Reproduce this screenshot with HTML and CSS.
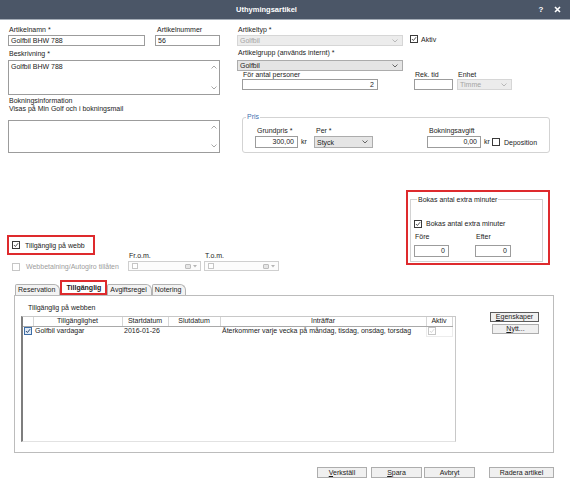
FILE: index.html
```html
<!DOCTYPE html>
<html lang="sv">
<head>
    <meta charset="UTF-8">
    <title>Uthymingsartikel</title>
    <link rel="stylesheet" href="styles.css">
</head>
<body>
    <div class="titlebar">
        <span class="title">Uthymingsartikel</span>
        <span class="tb-btn">?</span>
        <span class="tb-btn">
            <svg width="7" height="7" viewBox="0 0 7 7"><path d="M1 1L6 6M6 1L1 6" stroke="#fff" stroke-width="1.6"/></svg>
        </span>
    </div>

    <div class="content">
        <!-- övre delen: artikeldata -->
        <div class="top">
            <div class="col">
                <div class="row">
                    <div class="field f-name">
                        <span class="lbl">Artikelnamn *</span>
                        <div class="input">Golfbil BHW 788</div>
                    </div>
                    <div class="field f-number">
                        <span class="lbl">Artikelnummer</span>
                        <div class="input">56</div>
                    </div>
                </div>

                <span class="lbl lbl-desc">Beskrivning *</span>
                <div class="textarea ta-desc">
                    <div class="text">Golfbil BHW 788</div>
                    <div class="scroll">
                        <svg class="arrow" viewBox="0 0 6 4"><path d="M0.5 3.5L3 1L5.5 3.5" fill="none" stroke="#a8a8a8"/></svg>
                        <svg class="arrow" viewBox="0 0 6 4"><path d="M0.5 0.5L3 3L5.5 0.5" fill="none" stroke="#a8a8a8"/></svg>
                    </div>
                </div>

                <div class="info">
                    <div>Bokningsinformation</div>
                    <div>Visas på Min Golf och i bokningsmail</div>
                </div>
                <div class="textarea ta-info">
                    <div class="text"></div>
                    <div class="scroll">
                        <svg class="arrow" viewBox="0 0 6 4"><path d="M0.5 3.5L3 1L5.5 3.5" fill="none" stroke="#a8a8a8"/></svg>
                        <svg class="arrow" viewBox="0 0 6 4"><path d="M0.5 0.5L3 3L5.5 0.5" fill="none" stroke="#a8a8a8"/></svg>
                    </div>
                </div>
            </div>

            <div class="col">
                <div class="row">
                    <div class="field f-type">
                        <span class="lbl">Artikeltyp *</span>
                        <div class="select disabled">
                            <span>Golfbil</span>
                            <svg class="chev" viewBox="0 0 6 4"><path d="M0.5 0.5L3 3L5.5 0.5" fill="none" stroke="#b8b8b8"/></svg>
                        </div>
                    </div>
                    <label class="check aktiv">
                        <span class="cb"><svg viewBox="0 0 10 10"><path d="M1.5 5L4 7.5L8.5 2" fill="none" stroke="#222" stroke-width="1.3"/></svg></span>
                        Aktiv
                    </label>
                </div>

                <span class="lbl lbl-group">Artikelgrupp (används internt) *</span>
                <div class="select sel-group">
                    <span>Golfbil</span>
                    <svg class="chev" viewBox="0 0 6 4"><path d="M0.5 0.5L3 3L5.5 0.5" fill="none" stroke="#666"/></svg>
                </div>

                <div class="row persons">
                    <div class="field f-persons">
                        <span class="lbl lbl-sm">För antal personer</span>
                        <div class="input num">2</div>
                    </div>
                    <div class="field f-rek">
                        <span class="lbl lbl-sm">Rek. tid</span>
                        <div class="input"></div>
                    </div>
                    <div class="field f-unit">
                        <span class="lbl lbl-sm">Enhet</span>
                        <div class="select disabled">
                            <span>Timme</span>
                            <svg class="chev" viewBox="0 0 6 4"><path d="M0.5 0.5L3 3L5.5 0.5" fill="none" stroke="#b8b8b8"/></svg>
                        </div>
                    </div>
                </div>

                <fieldset class="pris">
                    <legend>Pris</legend>
                    <div class="pris-row">
                        <div class="field f-price">
                            <span class="lbl lbl-sm">Grundpris *</span>
                            <div class="input tall num">300,00</div>
                        </div>
                        <span class="kr">kr</span>
                        <div class="field f-per">
                            <span class="lbl lbl-sm">Per *</span>
                            <div class="select tall">
                                <span>Styck</span>
                                <svg class="chev" viewBox="0 0 6 4"><path d="M0.5 0.5L3 3L5.5 0.5" fill="none" stroke="#666"/></svg>
                            </div>
                        </div>
                        <div class="field f-fee">
                            <span class="lbl lbl-sm">Bokningsavgift</span>
                            <div class="input tall num">0,00</div>
                        </div>
                        <span class="kr kr-fee">kr</span>
                        <label class="check deposit">
                            <span class="cb"></span>
                            Deposition
                        </label>
                    </div>
                </fieldset>
            </div>
        </div>

        <!-- webb + extra minuter -->
        <div class="middle">
            <div class="web">
                <div class="web-left">
                    <label class="check annot web-on">
                        <span class="cb"><svg viewBox="0 0 10 10"><path d="M1.5 5L4 7.5L8.5 2" fill="none" stroke="#222" stroke-width="1.3"/></svg></span>
                        Tillgänglig på webb
                    </label>
                    <label class="check web-pay">
                        <span class="cb disabled"></span>
                        Webbetalning/Autogiro tillåten
                    </label>
                </div>
                <div class="date-col">
                    <span class="lbl lbl-sm">Fr.o.m.</span>
                    <div class="picker">
                        <span class="cb small disabled"></span>
                        <span class="cal"></span>
                        <svg class="drop" viewBox="0 0 4 3"><path d="M0 0H4L2 2.5Z" fill="#b5b5b5"/></svg>
                    </div>
                </div>
                <div class="date-col">
                    <span class="lbl lbl-sm">T.o.m.</span>
                    <div class="picker">
                        <span class="cb small disabled"></span>
                        <span class="cal"></span>
                        <svg class="drop" viewBox="0 0 4 3"><path d="M0 0H4L2 2.5Z" fill="#b5b5b5"/></svg>
                    </div>
                </div>
            </div>

            <div class="annot extra">
                <fieldset class="extra-box">
                    <legend>Bokas antal extra minuter</legend>
                    <label class="check extra-check">
                        <span class="cb"><svg viewBox="0 0 10 10"><path d="M1.5 5L4 7.5L8.5 2" fill="none" stroke="#222" stroke-width="1.3"/></svg></span>
                        Bokas antal extra minuter
                    </label>
                    <div class="extra-grid">
                        <span class="lbl lbl-sm">Före</span>
                        <span class="lbl lbl-sm">Efter</span>
                        <div class="input tall num">0</div>
                        <div class="input tall num">0</div>
                    </div>
                </fieldset>
            </div>
        </div>

        <!-- flikar -->
        <div class="tabs">
            <div class="tab">Reservation</div>
            <div class="tab active">Tillgänglig</div>
            <div class="tab">Avgiftsregel</div>
            <div class="tab">Notering</div>
        </div>
        <div class="panel">
            <div class="panel-main">
                <div class="panel-title">Tillgänglig på webben</div>
                <div class="grid">
                    <table>
                        <colgroup>
                            <col style="width:10px">
                            <col style="width:89px">
                            <col style="width:46px">
                            <col style="width:52px">
                            <col style="width:206px">
                            <col style="width:26px">
                        </colgroup>
                        <tr>
                            <th></th>
                            <th>Tillgänglighet</th>
                            <th>Startdatum</th>
                            <th>Slutdatum</th>
                            <th>Inträffar</th>
                            <th>Aktiv</th>
                        </tr>
                        <tr>
                            <td class="c-chk"><span class="cb blue"><svg viewBox="0 0 10 10"><path d="M1.5 5L4 7.5L8.5 2" fill="none" stroke="#17355f" stroke-width="1.5"/></svg></span></td>
                            <td>Golfbil vardagar</td>
                            <td>2016-01-26</td>
                            <td></td>
                            <td>Återkommer varje vecka på måndag, tisdag, onsdag, torsdag</td>
                            <td class="c-chk"><span class="cb disabled"><svg viewBox="0 0 10 10"><path d="M1.5 5L4 7.5L8.5 2" fill="none" stroke="#c8c8c8" stroke-width="1.2"/></svg></span></td>
                        </tr>
                    </table>
                </div>
            </div>
            <div class="panel-side">
                <div class="btn default"><u>E</u>genskaper</div>
                <div class="btn btn-new"><u>N</u>ytt...</div>
            </div>
        </div>

        <div class="actions">
            <div class="btn b-apply"><u>V</u>erkställ</div>
            <div class="btn b-save"><u>S</u>para</div>
            <div class="btn b-cancel">Avbryt</div>
            <div class="btn b-delete">Radera artikel</div>
        </div>
    </div>
</body>
</html>
```

FILE: styles.css
```css
* {
    box-sizing: border-box;
}

html, body {
    margin: 0;
}

body {
    width: 570px;
    height: 483px;
    overflow: hidden;
    background: #fff;
    font-family: "Liberation Sans", Arial, sans-serif;
    font-size: 7px;
    color: #1b1b1b;
}

/* titelrad */
.titlebar {
    display: flex;
    align-items: center;
    height: 20px;
    padding-right: 5px;
    background: #4b5667;
    border-bottom: 1px solid #a6aeb8;
    color: #fff;
    font-weight: bold;
}

.title {
    flex: 1;
    text-align: center;
    font-size: 7.5px;
}

.tb-btn {
    width: 16px;
    display: flex;
    justify-content: center;
    font-size: 8px;
}

.content {
    padding: 5px 16px 0 8px;
}

/* generella kontroller */
.top {
    display: grid;
    grid-template-columns: 212px 313px;
    column-gap: 17px;
}

.row {
    display: flex;
    align-items: flex-start;
}

.lbl {
    display: block;
    height: 9px;
    line-height: 9px;
    padding-left: 1px;
    white-space: nowrap;
}

.lbl-sm {
    height: 8px;
    line-height: 8px;
}

.input {
    height: 11px;
    margin-top: 1px;
    border: 1px solid #9c9c9c;
    background: #fff;
    line-height: 9px;
    padding: 0 2px;
    white-space: nowrap;
    overflow: hidden;
}

.lbl-sm + .input,
.lbl-sm + .select {
    margin-top: 0;
}

.input.tall {
    height: 12px;
    line-height: 10px;
    margin-top: 1px;
}

.input.num {
    text-align: right;
    padding-right: 3px;
}

.select {
    height: 11px;
    margin-top: 1px;
    display: flex;
    align-items: center;
    justify-content: space-between;
    border: 1px solid #acacac;
    background: #e5e5e5;
    padding: 0 4px 0 2px;
    white-space: nowrap;
}

.select.tall {
    height: 12px;
    margin-top: 1px;
}

.select.disabled {
    background: #ececec;
    border-color: #d6d6d6;
    color: #a4a4a4;
}

.chev {
    width: 6px;
    height: 4px;
}

.cb {
    width: 8px;
    height: 8px;
    flex: none;
    display: inline-flex;
    align-items: center;
    justify-content: center;
    border: 1px solid #3a3a3a;
    background: #fff;
}

.cb svg {
    width: 6px;
    height: 6px;
}

.cb.disabled {
    border-color: #c6c6c6;
}

.cb.small {
    width: 6px;
    height: 6px;
}

.cb.blue {
    border-color: #3d6da6;
    background: #dfeaf7;
}

.check {
    display: flex;
    align-items: center;
    gap: 4px;
    white-space: nowrap;
}

/* vänster kolumn */
.f-name {
    width: 137px;
}

.f-number {
    width: 65px;
    margin-left: 10px;
}

.f-number .lbl {
    padding-left: 2px;
}

.lbl-desc {
    margin-top: 3px;
}

.textarea {
    display: flex;
    border: 1px solid #9c9c9c;
    background: #fff;
}

.textarea .text {
    flex: 1;
    padding: 1px 2px;
    line-height: 9px;
}

.scroll {
    width: 10px;
    display: flex;
    flex-direction: column;
    justify-content: space-between;
    align-items: center;
    padding: 4px 0;
}

.arrow {
    width: 6px;
    height: 4px;
}

.ta-desc {
    margin-top: 2px;
    height: 35px;
}

.info {
    margin-top: 2px;
    line-height: 7.5px;
    padding-left: 1px;
}

.ta-info {
    margin-top: 8px;
    height: 33px;
}

/* höger kolumn */
.f-type {
    width: 166px;
}

.aktiv {
    margin-left: 7px;
    margin-top: 10px;
    gap: 3px;
}

.lbl-group {
    margin-top: 2px;
}

.sel-group {
    width: 166px;
    margin-top: 3px;
}

.persons {
    margin-left: 5px;
}

.f-persons {
    width: 136px;
}

.f-rek {
    width: 39px;
    margin-left: 36px;
}

.f-unit {
    width: 55px;
    margin-left: 4px;
}

.pris {
    margin: 23px 0 0 5px;
    width: 308px;
    padding: 6px 0 4px 0;
    border: 1px solid #d3d3d3;
    border-radius: 3px;
}

.pris legend {
    margin-left: 3px;
    padding: 0 1px;
    line-height: 8px;
    color: #3f6fb0;
}

.pris-row {
    display: flex;
    align-items: flex-end;
    padding-left: 12px;
}

.f-price {
    width: 43px;
}

.f-price .lbl,
.f-per .lbl,
.f-fee .lbl {
    padding-left: 2px;
}

.kr {
    width: 16px;
    padding-left: 3px;
    line-height: 12px;
}

.f-per {
    width: 59px;
}

.f-fee {
    width: 54px;
    margin-left: 54px;
}

.kr-fee {
    width: 11px;
}

.deposit {
    height: 12px;
}

/* mittdelen */
.middle {
    display: flex;
    align-items: flex-start;
    margin-top: 37px;
}

.annot {
    border: 2px solid #de2a2d;
}

.web {
    display: flex;
    align-items: flex-end;
    margin-top: 45px;
    margin-left: -1px;
}

.web-left {
    width: 121px;
}

.web-on {
    width: 88px;
    height: 20px;
    padding: 0 3px;
    gap: 5px;
}

.web-pay {
    height: 9px;
    margin-top: 7px;
    margin-left: 5px;
    gap: 6px;
    color: #9d9d9d;
}

.date-col {
    width: 73px;
    margin-right: 3px;
}

.date-col + .date-col {
    width: 75px;
}

.picker {
    height: 10px;
    margin-top: 1px;
    display: flex;
    align-items: center;
    border: 1px solid #cfcfcf;
    background: #fcfcfc;
    padding: 0 3px;
}

.cal {
    width: 6px;
    height: 5px;
    margin-left: auto;
    border: 1px solid #bdbdbd;
    border-radius: 1px;
    background: #e6e6e6;
}

.drop {
    width: 4px;
    height: 3px;
    margin-left: 2px;
}

.extra {
    width: 144px;
    margin-left: auto;
    margin-right: 4px;
    padding: 3px 5px 1px 2px;
}

.extra-box {
    margin: 0;
    padding: 0 0 4px 3px;
    border: 1px solid #d2d2d2;
}

.extra-box legend {
    margin-left: 3px;
    padding: 0 1px;
    line-height: 9px;
}

.extra-check {
    height: 9px;
    margin-top: 15px;
}

.extra-grid {
    display: grid;
    grid-template-columns: 61px 36px;
    margin-top: 5px;
}

.extra-grid .input {
    width: 35px;
    margin-top: 4px;
}

.extra-grid .input + .input {
    width: 36px;
}

/* flikar */
.tabs {
    display: flex;
    align-items: flex-end;
    height: 12px;
    margin-top: 12px;
    margin-left: 7px;
}

.tab {
    height: 11px;
    line-height: 10px;
    padding: 0 4px 0 2px;
    border: 1px solid #b3b3b3;
    border-bottom: none;
    border-radius: 2px 6px 0 0;
    background: #f3f3f3;
    white-space: nowrap;
}

.tab.active {
    width: 47px;
    height: 15px;
    line-height: 11px;
    padding: 0;
    text-align: center;
    font-weight: bold;
    background: #fff;
    border: 2px solid #de2a2d;
    border-radius: 0;
    position: relative;
    z-index: 1;
}

.panel {
    display: flex;
    align-items: flex-start;
    height: 158px;
    margin-left: 6px;
    padding: 7px 0 0 6px;
    border: 1px solid #bcbcbc;
}

.panel-main {
    width: 435px;
}

.panel-title {
    margin-left: 7px;
    line-height: 9px;
}

.grid {
    height: 126px;
    margin-top: 4px;
    border: 1px solid #c8c8c8;
    border-bottom-color: #e2e2e2;
    border-left: 2px solid #7e7e7e;
}

table {
    border-collapse: collapse;
    table-layout: fixed;
}

th, td {
    height: 9px;
    line-height: 8px;
    padding: 0 2px;
    white-space: nowrap;
    overflow: hidden;
    font-weight: normal;
}

th {
    text-align: center;
    border-right: 1px solid #d6d6d6;
    border-bottom: 1px solid #a9a9a9;
}

td.c-chk {
    padding: 0 1px;
}

td:last-child {
    border: 1px solid #ececec;
}

.panel-side {
    margin-left: 34px;
    margin-top: 9px;
}

.btn {
    height: 10px;
    line-height: 8px;
    text-align: center;
    border: 1px solid #adadad;
    background: #f0f0f0;
    white-space: nowrap;
}

.btn u {
    text-decoration-thickness: 0.5px;
    text-underline-offset: 1px;
}

.panel-side .btn {
    width: 49px;
}

.btn.default {
    border-color: #5b5b5b;
}

.panel-side .btn-new {
    width: 47px;
    margin: 2px 0 0 2px;
}

/* knappar nederst */
.actions {
    display: flex;
    justify-content: flex-end;
    margin-top: 14px;
}

.actions .btn {
    height: 11px;
    line-height: 9px;
}

.b-apply {
    width: 50px;
}

.b-save {
    width: 51px;
    margin-left: 4px;
}

.b-cancel {
    width: 51px;
    margin-left: 2px;
}

.b-delete {
    width: 65px;
    margin-left: 14px;
}
```
